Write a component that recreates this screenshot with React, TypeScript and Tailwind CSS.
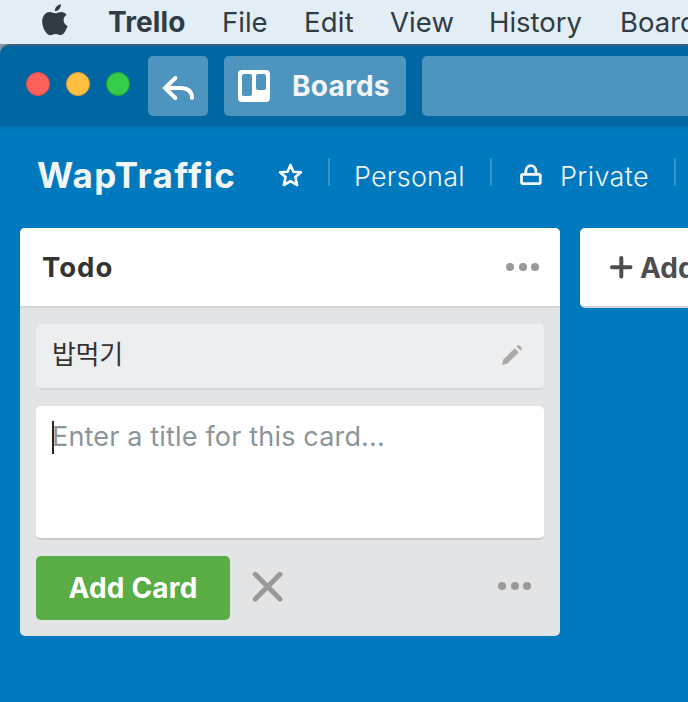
import React from "react";

function AppleLogo() {
  return (
    <svg className="ml-[42px] -mt-[4px] h-[32px] w-[26px] shrink-0" viewBox="0 0 26 32" fill="#303b43">
      <path d="M18.9 0.2C19.2 3.7 16.2 7.2 12.9 7.1C12.5 3.8 15.7 0.4 18.9 0.2Z" />
      <path d="M13.2 9.3C14.7 9.3 16.4 7.9 19.2 7.9C21.6 8 23.5 9 24.7 10.8C20.1 13.7 20.8 20 25.6 22C24.6 24.9 22.2 30.9 18.8 31.1C16.8 31.2 16 29.9 13.6 29.9C11.2 29.9 10.3 31.1 8.4 31.2C4.6 31.3 0.2 24 0.2 17.5C0.2 11.3 4.1 8 7.7 8C10.1 8 11.9 9.3 13.2 9.3Z" />
    </svg>
  );
}

function Dots() {
  return (
    <div className="flex gap-[4.5px]">
      <i className="h-[8px] w-[8px] rounded-full bg-[#999]" />
      <i className="h-[8px] w-[8px] rounded-full bg-[#999]" />
      <i className="h-[8px] w-[8px] rounded-full bg-[#999]" />
    </div>
  );
}

function MenuBar() {
  return (
    <div className="flex h-[44px] items-center bg-[#e2edf6] text-[27.5px] leading-[44px] text-[#303b43]">
      <AppleLogo />
      <span className="ml-[40px] w-[114px] shrink-0 text-[28px] font-bold tracking-[0.1px]">Trello</span>
      <span className="w-[82px] shrink-0">File</span>
      <span className="w-[86px] shrink-0 tracking-[0.2px]">Edit</span>
      <span className="w-[99px] shrink-0 tracking-[0.1px]">View</span>
      <span className="w-[131px] shrink-0">History</span>
      <span className="shrink-0">Board</span>
    </div>
  );
}

function TitleBar() {
  return (
    <div className="h-[82px] bg-[linear-gradient(135deg,#7895ac_0_8px,#0067a3_8px)]">
      <div className="flex h-[82px] rounded-tl-[10px] border-t-2 border-[#3c5f7a] bg-[#0067a3] pt-[10px]">
        <div className="ml-[26px] mt-[16px] flex gap-[16px]">
          <i className="h-[24px] w-[24px] rounded-full border border-[#e5484a] bg-[#fc615c]" />
          <i className="h-[24px] w-[24px] rounded-full border border-[#dda033] bg-[#fdbe41]" />
          <i className="h-[24px] w-[24px] rounded-full border border-[#1fa434] bg-[#35cb4b]" />
        </div>
        <div className="ml-[18px] h-[60px] w-[60px] rounded-[5px] bg-[#4d94bf]">
          <svg width="60" height="60" viewBox="0 0 60 60" fill="none" stroke="white" strokeWidth="4" strokeLinecap="round" strokeLinejoin="miter">
            <path d="M27.3 22L17 32L27.3 42M18 32H32C40 32 44 35.5 44 42" />
          </svg>
        </div>
        <div className="ml-[16px] flex h-[60px] w-[182px] rounded-[5px] bg-[#4d94bf]">
          <svg className="ml-[14px] mt-[14px] h-[32px] w-[32px]" viewBox="0 0 32 32">
            <rect width="32" height="32" rx="4" fill="white" />
            <rect x="4" y="4" width="10" height="22" rx="2" fill="#4d94bf" />
            <rect x="18" y="4" width="10" height="16" rx="2" fill="#4d94bf" />
          </svg>
          <span className="ml-[22px] text-[28px] font-bold leading-[61px] tracking-[0.25px] text-[#f2f4f8]">Boards</span>
        </div>
        <div className="ml-[16px] h-[60px] flex-1 rounded-l-[5px] bg-[#4d94bf]" />
      </div>
    </div>
  );
}

function BoardHeader() {
  return (
    <div className="flex h-[102px] items-start bg-[linear-gradient(#0072b4,#0079bf_5px)] text-[27px] leading-[40px] text-[#f2f5f9]">
      <span className="ml-[37px] mt-[29px] w-[241px] text-[35px] font-bold tracking-[1.3px] [font-variant-ligatures:none]">WapTraffic</span>
      <svg className="mt-[37px] h-[25px] w-[25px] shrink-0" viewBox="0 0 25 25" fill="none" stroke="white" strokeWidth="2.6" strokeLinejoin="round">
        <path d="M12.5 2L15.4 8.8L23 9.3L17.4 14.1L19.1 22L12.5 18.2L5.9 22L7.6 14.1L2 9.3L9.6 8.8Z" />
      </svg>
      <i className="ml-[25px] mt-[32px] h-[28px] w-[2px] bg-[#3394cb]" />
      <span className="ml-[24px] mt-[31px] w-[136px] font-[350] tracking-[0.2px]">Personal</span>
      <i className="mt-[32px] h-[28px] w-[2px] bg-[#3394cb]" />
      <svg className="ml-[28px] mt-[38px] h-[22px] w-[22px] shrink-0" viewBox="0 0 22 22" fill="none" stroke="#f5f7fb" strokeWidth="2.8">
        <rect x="1.5" y="10.3" width="18.8" height="9.3" rx="1.4" />
        <path d="M5.8 10V8C5.8 -0.6 16 -0.6 16 8V10" />
      </svg>
      <span className="ml-[18px] mt-[31px] w-[114px] font-[350] tracking-[0.4px]">Private</span>
      <i className="mt-[32px] h-[28px] w-[2px] bg-[#3394cb]" />
    </div>
  );
}

function TodoList() {
  return (
    <section className="h-[408px] w-[540px] shrink-0 overflow-hidden rounded-[5px] bg-[#e2e4e6]">
      <header className="flex h-[80px] items-center justify-between border-b-2 border-[#d5d7d9] bg-white pb-px pl-[22px] pr-[21px]">
        <h2 className="text-[27.5px] font-bold leading-[40px] tracking-[1px] text-[#333]">Todo</h2>
        <Dots />
      </header>
      <div className="mx-[16px] mt-[16px] flex h-[66px] justify-between rounded-[5px] border-b-2 border-[#d6d8da] bg-[#edeef0]">
        <span className="ml-[16px] font-['Noto_Sans_CJK_KR',sans-serif] text-[26px] font-normal leading-[58px] tracking-[-0.3px] text-[#333]">밥먹기</span>
        <svg className="mr-[21px] mt-[21px] h-[20px] w-[21px]" viewBox="0 0 21 20" fill="#aaa">
          <path d="M0 20L1.2 14.8L12.8 3.2L16.8 7.2L5.2 18.8Z" />
          <path d="M14.5 1.5Q16.3 -0.7 18.6 1.4Q21.3 3.8 18.8 5.8Z" />
        </svg>
      </div>
      <div className="mx-[16px] mt-[16px] flex h-[134px] rounded-[5px] border-b-2 border-[#c9cacc] bg-white">
        <i className="ml-[16px] mt-[15px] h-[33px] w-[2px] bg-[#222]" />
        <span className="-ml-[2px] mt-[11px] text-[27px] font-normal leading-[40px] tracking-[0.17px] text-[#8a9599]">Enter a title for this card...</span>
      </div>
      <div className="mx-[16px] mt-[16px] flex h-[64px]">
        <button className="h-[64px] w-[194px] rounded-[5px] bg-[#5aac44] text-[28px] font-bold tracking-[0.2px] text-white">Add Card</button>
        <svg className="ml-[22px] mt-[15px] h-[32px] w-[32px]" viewBox="0 0 32 32" stroke="#999" strokeWidth="5" strokeLinecap="round">
          <path d="M3.3 3.3L28 28M28 3.3L3.3 28" />
        </svg>
        <div className="ml-auto mr-[13px] mt-[26.3px]"><Dots /></div>
      </div>
    </section>
  );
}

export default function App() {
  return (
    <main className="h-[702px] w-[688px] overflow-hidden whitespace-nowrap bg-[#0079bf] font-['Inter',sans-serif]">
      <MenuBar />
      <TitleBar />
      <BoardHeader />
      <div className="flex items-start gap-[20px] pl-[20px]">
        <TodoList />
        <div className="flex h-[80px] w-[540px] shrink-0 rounded-[5px] border-b-2 border-[#ccd5da] bg-white">
          <svg className="ml-[30px] mt-[28px] h-[23px] w-[23px]" viewBox="0 0 23 23" stroke="#4d4d4d" strokeWidth="4" strokeLinecap="round">
            <path d="M11.3 2V20.5M2 11.3H20.5" />
          </svg>
          <span className="ml-[7px] mt-[20px] text-[28px] font-bold leading-[41px] text-[#4d4d4d]">Add a list...</span>
        </div>
      </div>
    </main>
  );
}
